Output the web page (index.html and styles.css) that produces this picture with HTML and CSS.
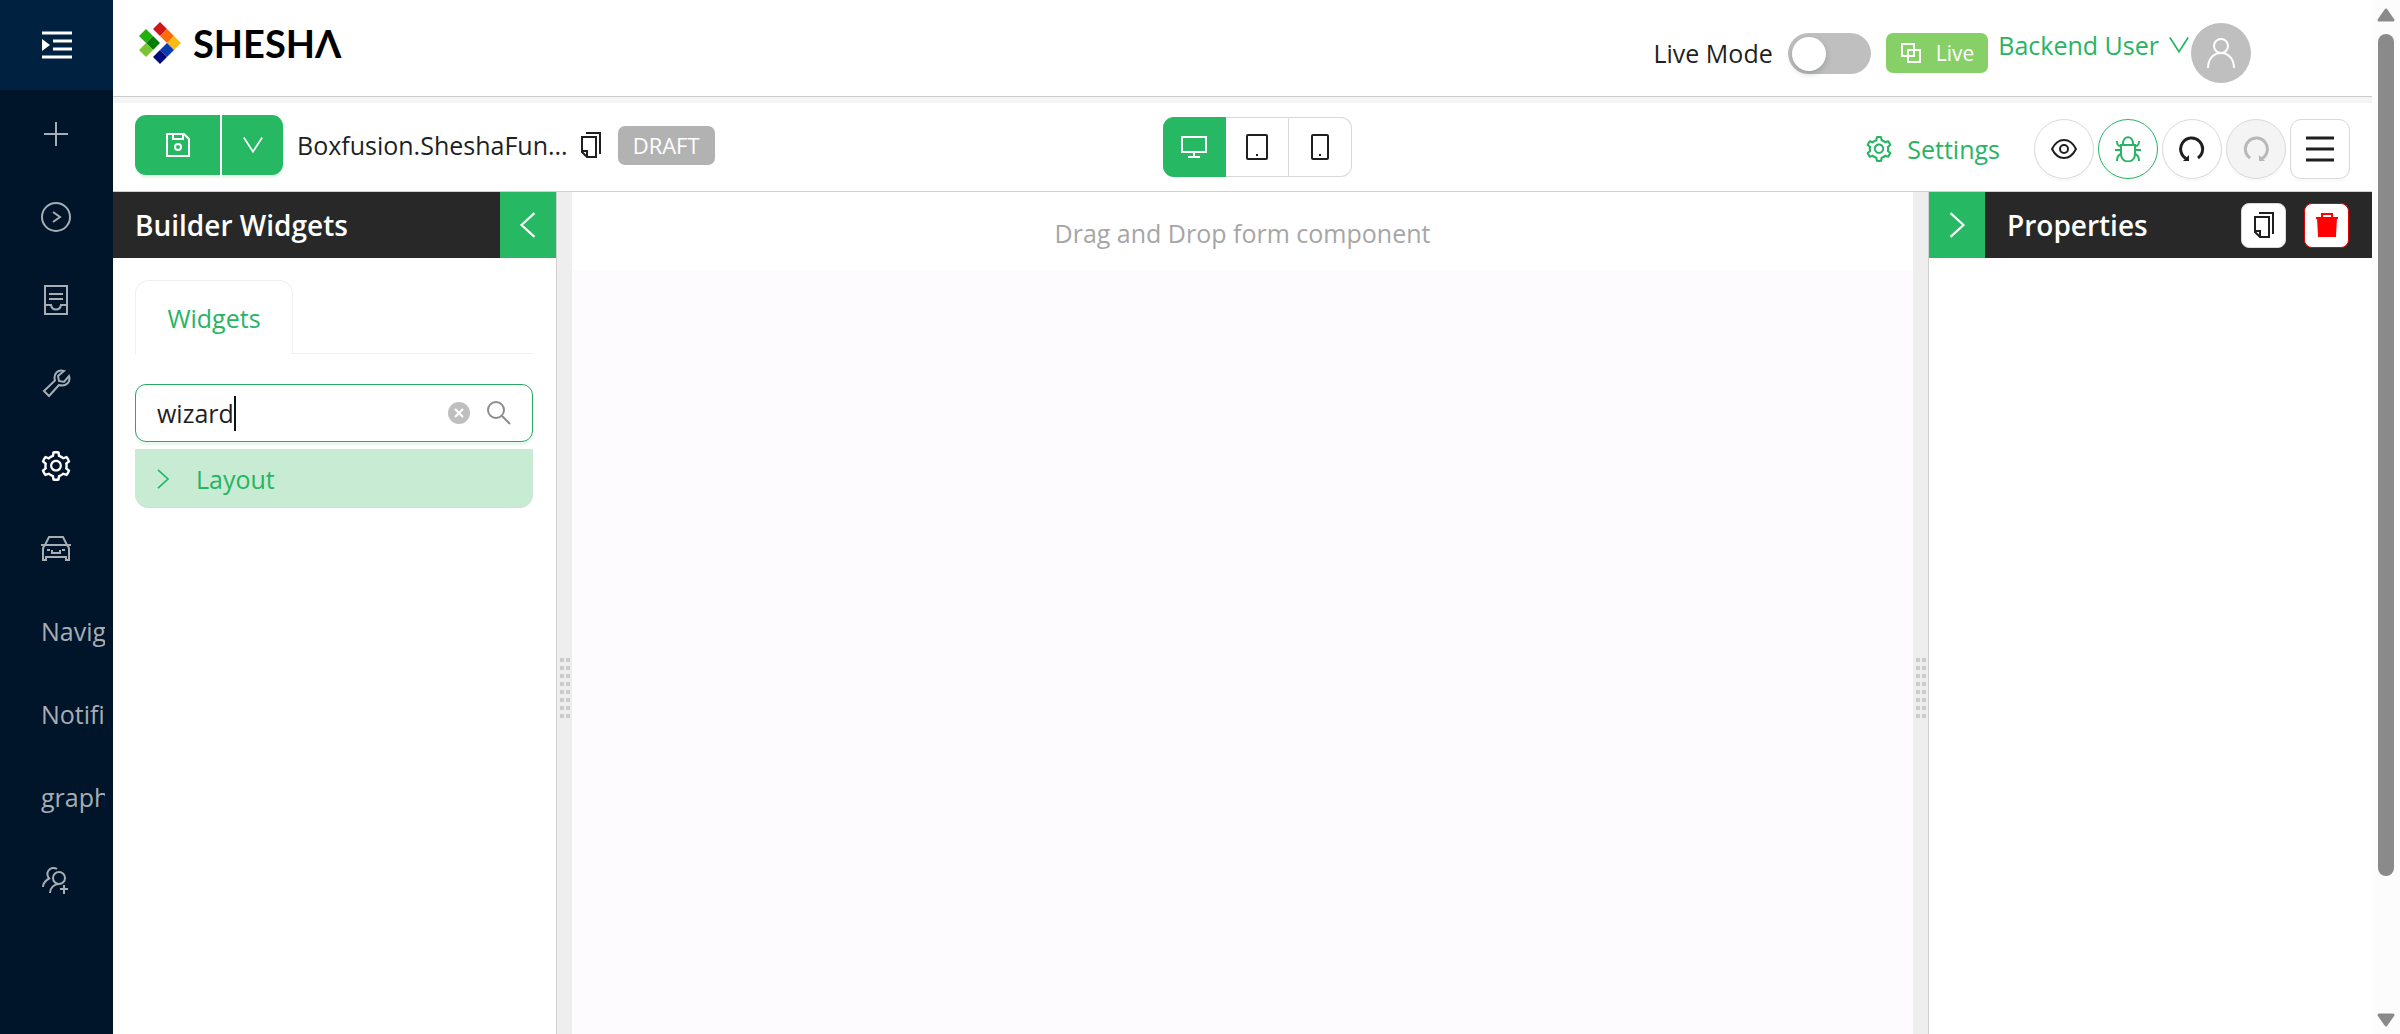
FILE: index.html
```html
<!DOCTYPE html>
<html lang="en">
<head>
  <meta charset="UTF-8" />
  <meta name="viewport" content="width=device-width, initial-scale=1.0"/>
  <title>Shesha Form Designer</title>
  <link rel="stylesheet" href="styles.css">
</head>
<body>
  <!-- shared icon shapes -->
  <svg class="sprite" aria-hidden="true">
    <symbol id="i-gear" viewBox="64 64 896 896"><path fill="currentColor" stroke="none" d="M924.8 625.7l-65.5-56c3.1-19 4.7-38.4 4.7-57.8s-1.6-38.8-4.7-57.8l65.5-56a32.03 32.03 0 009.3-35.2l-.9-2.6a443.74 443.74 0 00-79.7-137.9l-1.8-2.1a32.12 32.12 0 00-35.1-9.5l-81.3 28.9c-30-24.6-63.5-44-99.7-57.6l-15.7-85a32.05 32.05 0 00-25.8-25.7l-2.7-.5c-52.1-9.4-106.9-9.4-159 0l-2.7.5a32.05 32.05 0 00-25.8 25.7l-15.8 85.4a351.86 351.86 0 00-99 57.4l-81.9-29.1a32 32 0 00-35.1 9.5l-1.8 2.1a446.02 446.02 0 00-79.7 137.9l-.9 2.6c-4.5 12.5-.8 26.5 9.3 35.2l66.3 56.6c-3.1 18.8-4.6 38-4.6 57.1 0 19.2 1.5 38.4 4.6 57.1L99 625.5a32.03 32.03 0 00-9.3 35.2l.9 2.6c18.1 50.4 44.9 96.9 79.7 137.9l1.8 2.1a32.12 32.12 0 0035.1 9.5l81.9-29.1c29.8 24.5 63.1 43.9 99 57.4l15.8 85.4a32.05 32.05 0 0025.8 25.7l2.7.5a449.4 449.4 0 00159 0l2.7-.5a32.05 32.05 0 0025.8-25.7l15.7-85a350 350 0 0099.7-57.6l81.3 28.9a32 32 0 0035.1-9.5l1.8-2.1c34.8-41.1 61.6-87.5 79.7-137.9l.9-2.6c4.5-12.3.8-26.3-9.3-35zM788.3 465.9c2.5 15.1 3.8 30.6 3.8 46.1s-1.3 31-3.8 46.1l-6.6 40.1 74.7 63.9a370.03 370.03 0 01-42.6 73.6L721 702.8l-31.4 25.8c-23.9 19.6-50.5 35-79.3 45.8l-38.1 14.3-17.9 97a377.5 377.5 0 01-85 0l-17.9-97.2-37.8-14.5c-28.5-10.8-55-26.2-78.7-45.7l-31.4-25.9-93.4 33.2c-17-22.9-31.2-47.6-42.6-73.6l75.5-64.5-6.5-40c-2.4-14.9-3.7-30.3-3.7-45.5 0-15.3 1.2-30.6 3.7-45.5l6.5-40-75.5-64.5c11.3-26.1 25.6-50.7 42.6-73.6l93.4 33.2 31.4-25.9c23.7-19.5 50.2-34.9 78.7-45.7l37.9-14.3 17.9-97.2c28.1-3.2 56.8-3.2 85 0l17.9 97 38.1 14.3c28.7 10.8 55.4 26.2 79.3 45.8l31.4 25.8 92.8-32.9c17 22.9 31.2 47.6 42.6 73.6L781.8 426l6.5 39.9zM512 326c-97.2 0-176 78.8-176 176s78.8 176 176 176 176-78.8 176-176-78.8-176-176-176zm79.2 255.2A111.6 111.6 0 01512 614c-29.9 0-58-11.7-79.2-32.8A111.6 111.6 0 01400 502c0-29.9 11.7-58 32.8-79.2C454 401.6 482.1 390 512 390c29.9 0 58 11.6 79.2 32.8A111.6 111.6 0 01624 502c0 29.9-11.7 58-32.8 79.2z"/></symbol>
    <symbol id="i-copy" viewBox="0 0 26 26"><path d="M8 1h14v21M4 5h14v20H9l-5-5zM4 19h5v6"/></symbol>
    <symbol id="i-down" viewBox="0 0 24 24"><path d="M1 3l11 17L23 3"/></symbol>
    <symbol id="i-left" viewBox="0 0 24 24"><path d="M18 1L6 12l12 11"/></symbol>
    <symbol id="i-right" viewBox="0 0 24 24"><path d="M6 1l12 11L6 23"/></symbol>
    <symbol id="i-turn" viewBox="0 0 26 26"><path d="M8 23A11 11 0 1 1 19 22"/><path class="solid" stroke="none" d="M4 25l6-6v6z"/></symbol>
  </svg>

  <div class="app">
    <nav class="sidebar">
      <button class="toggle" aria-label="Expand menu">
        <svg class="icon lg" viewBox="0 0 30 30"><path d="M0 3h30M11 11h19M11 19h19M0 27h30"/><path class="solid" stroke="none" d="M0 9l8 6-8 6z"/></svg>
      </button>
      <ul class="menu">
        <li><a href="#" aria-label="Add"><svg class="icon lg" viewBox="0 0 30 30"><path d="M15 3v24M3 15h24"/></svg></a></li>
        <li><a href="#" aria-label="Run"><svg class="icon lg" viewBox="0 0 30 30"><circle cx="15" cy="15" r="14"/><path d="M12 10l7 5-7 5"/></svg></a></li>
        <li><a href="#" aria-label="Records"><svg class="icon lg" viewBox="0 0 30 30"><path d="M4 1h22v28H4zM8 9h14M8 14h14M4 20h6c1 6 9 6 10 0h6"/></svg></a></li>
        <li><a href="#" aria-label="Tools"><svg class="icon lg" viewBox="0 0 30 30"><path d="M3 23L14 12.500C12 6 17 1 23 3l-6 5 1 5 5 1 5-6c2 6-3 11-10 9L8 28z"/></svg></a></li>
        <li class="active"><a href="#" aria-label="Configuration"><svg class="icon lg"><use href="#i-gear"/></svg></a></li>
        <li><a href="#" aria-label="Vehicles"><svg class="icon lg" viewBox="0 0 30 30"><path d="M0 12h4L8 4h14l4 8h4M4 12h22M4 12l-2 3v12h3v-3h20v3h3V15l-2-3M6 17h3M21 17h3M11 17v3h8v-3"/></svg></a></li>
        <li><a href="#">Navigation</a></li>
        <li><a href="#">Notifications</a></li>
        <li><a href="#">graph</a></li>
        <li><a href="#" aria-label="Add user"><svg class="icon lg" viewBox="0 0 30 30"><circle cx="18" cy="13" r="6"/><path d="M9 28c0-5 4-9 9-9M9 14A6 6 0 1 1 16 4M2 22c0-5 3-7 7-9M23 20v9M19 24h8"/></svg></a></li>
      </ul>
    </nav>

    <div class="page">
      <header class="topbar">
        <a class="brand" href="#">
          <svg class="mark" viewBox="0 0 42 42">
            <path fill="#d01616" d="M14 7l7-7 7 7-7 7z"/>
            <path fill="#ff6a0a" d="M21 14l7-7 7 7-7 7z"/>
            <path fill="#fdb913" d="M28 21l7-7 7 7-7 7z"/>
            <path fill="#0a3bb0" d="M21 28l7-7 7 7-7 7z"/>
            <path fill="#000b7d" d="M14 35l7-7 7 7-7 7z"/>
            <path fill="#22b00f" d="M0 14l7-7 7 7-7 7z"/>
            <path fill="#067d05" d="M7 21l7-7 7 7-7 7z"/>
            <path fill="#7cc332" d="M0 28l7-7 7 7-7 7z"/>
          </svg>
          <span class="wordmark">SHESHΛ</span>
        </a>
        <div class="account">
          <label for="liveMode">Live Mode</label>
          <input type="checkbox" role="switch" class="switch" id="liveMode">
          <span class="live"><svg class="icon sm" viewBox="0 0 20 20"><path d="M1 1h12v12H1zM7 7h12v12H7z"/></svg>Live</span>
          <a class="user" href="#">Backend User <svg class="icon sm"><use href="#i-down"/></svg></a>
          <span class="avatar"><svg class="icon lg" viewBox="0 0 30 30"><circle cx="15" cy="8" r="7"/><path d="M2 30c0-20 26-20 26 0"/></svg></span>
        </div>
      </header>

      <div class="toolbar">
        <div class="tools">
          <div class="save">
            <button aria-label="Save"><svg class="icon" viewBox="0 0 26 26"><path d="M2 2h17l5 5v17H2zM8 2v5h10V2"/><circle cx="13" cy="15" r="3"/></svg></button>
            <button aria-label="More save options"><svg class="icon sm"><use href="#i-down"/></svg></button>
          </div>
          <span class="form-name">Boxfusion.SheshaFun...</span>
          <button class="plain" aria-label="Copy name"><svg class="icon"><use href="#i-copy"/></svg></button>
          <span class="status">DRAFT</span>
        </div>

        <div class="devices">
          <button class="selected" aria-label="Desktop"><svg class="icon" viewBox="0 0 26 26"><path d="M1 3h24v15H1zM13 18v5M7 23h12"/></svg></button>
          <button aria-label="Tablet"><svg class="icon" viewBox="0 0 26 26"><rect x="3" y="1" width="20" height="24" rx="1"/><path d="M12 21h2"/></svg></button>
          <button aria-label="Phone"><svg class="icon" viewBox="0 0 26 26"><rect x="5" y="1" width="16" height="24" rx="1"/><path d="M12 21h2"/></svg></button>
        </div>

        <div class="tools end">
          <a class="settings" href="#"><svg class="icon"><use href="#i-gear"/></svg>Settings</a>
          <button class="round" aria-label="Preview"><svg class="icon" viewBox="0 0 26 26"><path d="M1 13c6-12 18-12 24 0-6 12-18 12-24 0z"/><circle cx="13" cy="13" r="4"/></svg></button>
          <button class="round debug" aria-label="Debug"><svg class="icon" viewBox="0 0 26 26"><path d="M6 9h14v9c0 10-14 10-14 0zM8 8c0-9 10-9 10 0M0 14h6M20 14h6M6 10c-3 0-4-1-4-5M20 10c3 0 4-1 4-5M6 18c-3 1-4 3-4 7M20 18c3 1 4 3 4 7"/></svg></button>
          <button class="round" aria-label="Undo"><svg class="icon turn"><use href="#i-turn"/></svg></button>
          <button class="round" aria-label="Redo" disabled><svg class="icon turn flip"><use href="#i-turn"/></svg></button>
          <button class="round square" aria-label="Menu"><svg class="icon lg bars" viewBox="0 0 30 30"><path d="M1 4h28M1 15h28M1 26h28"/></svg></button>
        </div>
      </div>

      <main class="designer">
        <section class="panel left">
          <div class="panel-head">
            <h2>Builder Widgets</h2>
            <button class="collapse" aria-label="Collapse widgets"><svg class="icon"><use href="#i-left"/></svg></button>
          </div>
          <div class="panel-body">
            <div class="tabs"><button class="tab">Widgets</button></div>
            <div class="search">
              <input type="text" aria-label="Search widgets" value="wizard">
              <span class="caret"></span>
              <button class="clear" aria-label="Clear"><svg viewBox="0 0 22 22"><path d="M7 7l8 8M15 7l-8 8"/></svg></button>
              <svg class="icon find" viewBox="0 0 26 26"><circle cx="10" cy="10" r="8"/><path d="M16 16l8 8"/></svg>
            </div>
            <button class="group"><svg class="icon sm"><use href="#i-right"/></svg>Layout</button>
          </div>
        </section>

        <div class="gutter"><span class="grip"></span></div>
        <section class="canvas">
          <p class="hint">Drag and Drop form component</p>
        </section>
        <div class="gutter"><span class="grip"></span></div>

        <section class="panel right">
          <div class="panel-head">
            <button class="collapse" aria-label="Collapse properties"><svg class="icon"><use href="#i-right"/></svg></button>
            <h2>Properties</h2>
            <div class="actions">
              <button aria-label="Copy"><svg class="icon"><use href="#i-copy"/></svg></button>
              <button class="danger" aria-label="Delete"><svg class="icon" viewBox="0 0 26 26"><path d="M8 5V2h10v3M2 6h22"/><path class="solid" d="M4 6h18l-1 18H5z"/></svg></button>
            </div>
          </div>
        </section>
      </main>
    </div>

    <div class="scrollbar">
      <svg viewBox="0 0 18 14"><path d="M9 2l7 10H2z"/></svg>
      <div class="track"><div class="thumb"></div></div>
      <svg viewBox="0 0 18 14"><path d="M9 12l7-10H2z"/></svg>
    </div>
  </div>
</body>
</html>
```

FILE: styles.css
```css
* {
  box-sizing: border-box;
}

body {
  margin: 0;
  font-family: "Open Sans", "Noto Sans", sans-serif;
  font-size: 25px;
  line-height: 36px;
  color: #1f1f1f;
  background: #fff;
}

button, input {
  font: inherit;
  color: inherit;
  padding: 0;
  border: 0;
  background: none;
}

a {
  color: #27b463;
  text-decoration: none;
}

.sprite {
  display: none;
}

.icon {
  width: 26px;
  height: 26px;
  flex: none;
  fill: none;
  stroke: currentColor;
  stroke-width: 2px;
}

.icon.lg {
  width: 30px;
  height: 30px;
}

.icon.sm {
  width: 20px;
  height: 20px;
}

.icon.turn {
  stroke-width: 3px;
}

.icon.flip {
  transform: scaleX(-1);
}

.icon.bars {
  stroke-width: 3px;
}

.solid {
  fill: currentColor;
}

.app {
  display: flex;
  min-height: 100vh;
}

/* sidebar */
.sidebar {
  width: 113px;
  flex: none;
  background: #001529;
  color: #a6adb4;
}

.toggle {
  display: grid;
  place-items: center;
  width: 100%;
  height: 90px;
  background: #002140;
  color: #fff;
}

.toggle .icon {
  stroke-width: 3px;
}

.menu {
  list-style: none;
  margin: 9px 8px 0 0;
  padding: 0;
  height: 816px;
  display: flex;
  flex-direction: column;
  justify-content: space-between;
}

.menu a {
  display: flex;
  align-items: center;
  height: 70px;
  padding-left: 41px;
  overflow: hidden;
  white-space: nowrap;
  color: inherit;
}

.menu .active {
  color: #fff;
}

/* top bar */
.page {
  flex: 1;
  min-width: 0;
  display: flex;
  flex-direction: column;
}

.topbar {
  height: 103px;
  border-bottom: 6px solid #f4f4f4;
  box-shadow: inset 0 -1px #ccc;
  display: flex;
  justify-content: space-between;
  padding: 0 121px 0 26px;
}

.brand {
  display: flex;
  gap: 12px;
  height: 85px;
  align-items: center;
  color: #000;
}

.mark {
  width: 42px;
  height: 42px;
}

.wordmark {
  font-family: Lato, "Open Sans", sans-serif;
  font-size: 38px;
  font-weight: 700;
}

.account {
  display: flex;
  align-items: center;
  height: 106px;
}

.switch {
  appearance: none;
  width: 83px;
  height: 41px;
  margin: 0 15px;
  padding: 4px;
  border-radius: 21px;
  background: #bfbfbf;
}

.switch::before {
  content: "";
  display: block;
  width: 34px;
  height: 34px;
  border-radius: 50%;
  background: #fff;
  box-shadow: 0 3px 6px rgba(0,35,11,0.2);
}

.live {
  display: flex;
  align-items: center;
  gap: 15px;
  height: 40px;
  padding: 0 14px 0 15px;
  border-radius: 7px;
  background: #87d068;
  color: #fff;
  font-size: 21px;
}

.user {
  display: flex;
  align-items: center;
  gap: 10px;
  height: 36px;
  padding: 0 2px 0 10px;
  align-self: flex-start;
  margin-top: 27px;
}

.avatar {
  display: grid;
  place-items: center;
  width: 60px;
  height: 60px;
  border-radius: 50%;
  background: #bfbfbf;
  color: #fff;
}

/* toolbar */
.toolbar {
  height: 89px;
  flex: none;
  border-bottom: 1px solid #d0d0d0;
  padding: 0 22px;
  display: grid;
  grid-template-columns: 1fr auto 1fr;
  align-items: center;
}

.tools {
  display: flex;
  align-items: center;
  padding-bottom: 4px;
}

.tools.end {
  justify-content: flex-end;
  gap: 4px;
  padding: 3px 0 0;
}

.save {
  display: flex;
  gap: 2px;
  margin-right: 14px;
}

.save button {
  width: 85px;
  height: 60px;
  display: grid;
  place-items: center;
  background: #27b863;
  color: #fff;
  border-radius: 11px 0 0 11px;
  box-shadow: 0 3px 0 #e6f9ec;
}

.save button + button {
  width: 61px;
  border-radius: 0 11px 11px 0;
}

.form-name {
  font-weight: 500;
}

.plain {
  display: flex;
  margin: 0 14px 0 10px;
}

.status {
  height: 39px;
  line-height: 39px;
  padding: 0 15px;
  border-radius: 7px;
  background: #b2b2b2;
  color: #fff;
  font-size: 22px;
}

.devices {
  display: flex;
  margin-left: 30px;
}

.devices button {
  width: 63px;
  height: 60px;
  display: grid;
  place-items: center;
  border: 1px solid #d9d9d9;
  border-left: 0;
}

.devices .selected {
  background: #27b863;
  border-color: #27b863;
  color: #fff;
  border-radius: 11px 0 0 11px;
}

.devices button:last-child {
  border-radius: 0 11px 11px 0;
}

.settings {
  display: flex;
  align-items: center;
  gap: 15px;
  margin-right: 30px;
}

.round {
  width: 60px;
  height: 60px;
  display: grid;
  place-items: center;
  border: 1px solid #d9d9d9;
  border-radius: 50%;
  background: #fff;
  box-shadow: 0 3px 0 #fafafa;
}

.round.square {
  border-radius: 11px;
}

.debug {
  border-color: #27b463;
  color: #27b463;
}

.round:disabled {
  background: #f4f4f4;
  color: #b8b8b8;
}

/* designer */
.designer {
  flex: 1;
  display: flex;
}

.panel.left {
  width: 444px;
  border-right: 1px solid #d0d0d0;
}

.panel.right {
  width: 444px;
  border-left: 1px solid #d0d0d0;
}

.panel-head {
  display: flex;
  align-items: center;
  height: 66px;
  background: #282828;
  color: #fff;
}

.panel-head h2 {
  flex: 1;
  margin: 0;
  padding-left: 22px;
  font-size: 28px;
  font-weight: 600;
}

.collapse {
  width: 56px;
  height: 66px;
  display: grid;
  place-items: center;
  background: #27b863;
}

.panel-body {
  padding: 22px 23px 0 22px;
}

.tabs {
  display: flex;
  height: 74px;
  margin-bottom: 30px;
  box-shadow: inset 0 -1px #f0f0f0;
}

.tab {
  width: 158px;
  border: 1px solid #f0f0f0;
  border-bottom: 0;
  border-radius: 14px 14px 0 0;
  background: #fff;
  color: #27b463;
}

.search {
  display: flex;
  align-items: center;
  height: 58px;
  padding: 0 20px 0 21px;
  border: 1px solid #27a863;
  border-radius: 11px;
  box-shadow: 0 3px 0 #e9f8ef;
}

.search input {
  field-sizing: content;
  outline: 0;
}

.caret {
  width: 2px;
  height: 35px;
  background: #111;
}

.clear {
  width: 22px;
  height: 22px;
  margin: 0 16px 0 auto;
  border-radius: 50%;
  background: #bfbfbf;
}

.clear svg {
  display: block;
  stroke: #fff;
  stroke-width: 2px;
}

.find {
  color: #8c8c8c;
}

.group {
  display: flex;
  align-items: center;
  gap: 23px;
  width: 100%;
  height: 59px;
  margin-top: 7px;
  padding-left: 18px;
  border-radius: 0 0 14px 14px;
  background: #c8ebd3;
  box-shadow: inset 0 -1px #d9d9d9;
  color: #27b463;
}

.gutter {
  width: 15px;
  background: #eee;
  display: grid;
  place-items: center;
  padding-top: 150px;
}

.grip {
  width: 10px;
  height: 60px;
  background: repeating-linear-gradient(#ccc 0 4px, transparent 4px 8px);
  mask: linear-gradient(90deg, #000 4px, transparent 4px 6px, #000 6px);
}

.canvas {
  flex: 1;
  background: #fefbff;
}

.hint {
  margin: 0;
  height: 78px;
  padding-top: 23px;
  background: #fff;
  color: #a6a6a6;
  text-align: center;
}

.actions {
  display: flex;
  gap: 18px;
  padding-right: 23px;
}

.actions button {
  width: 45px;
  height: 45px;
  display: grid;
  place-items: center;
  border: 1px solid #d9d9d9;
  border-radius: 8px;
  background: #fff;
  color: #1f1f1f;
}

.actions .danger {
  border-color: #e00000;
  color: #f00;
}

/* page scrollbar */
.scrollbar {
  width: 28px;
  height: 100vh;
  flex: none;
  display: flex;
  flex-direction: column;
  align-items: center;
  padding: 8px 0 7px;
  background: #fcfcfc;
}

.scrollbar svg {
  width: 18px;
  height: 14px;
  fill: #8a8a8a;
  stroke: #8a8a8a;
  stroke-width: 3px;
  stroke-linejoin: round;
}

.track {
  flex: 1;
  padding-top: 12px;
}

.thumb {
  width: 16px;
  height: 86%;
  border-radius: 8px;
  background: #8a8a8a;
}
```
